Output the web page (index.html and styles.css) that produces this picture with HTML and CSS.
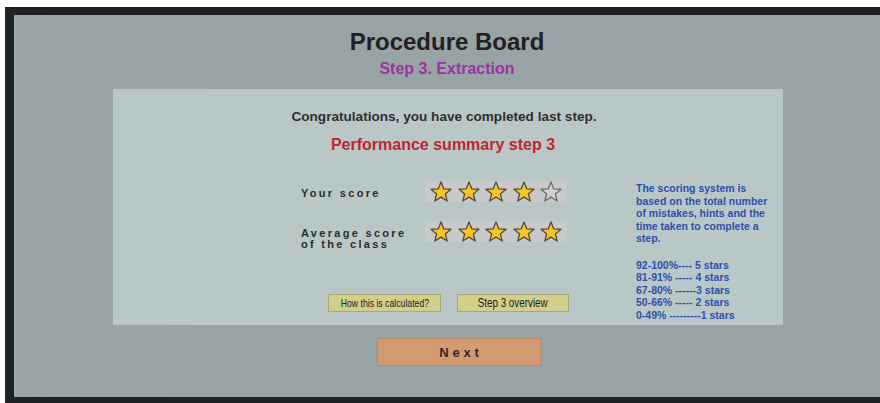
FILE: index.html
```html
<!DOCTYPE html>
<html lang="en">
<head>
<meta charset="utf-8">
<title>Procedure Board</title>
<link rel="stylesheet" href="styles.css">
</head>
<body>
<svg class="defs" width="0" height="0" aria-hidden="true">
  <defs>
    <symbol id="star" viewBox="0 0 24 22">
      <polygon points="12,1 14.7,7.78 21.99,8.26 16.38,12.92 18.17,20 12,16.1 5.83,20 7.62,12.92 2.01,8.26 9.3,7.78"/>
    </symbol>
  </defs>
</svg>
<div class="monitor">
  <main class="screen">
    <h1 class="title">Procedure Board</h1>
    <h2 class="subtitle">Step 3. Extraction</h2>

    <section class="panel">
      <header class="panel-head">
        <p class="congrats">Congratulations, you have completed last step.</p>
        <h3 class="summary">Performance summary step 3</h3>
      </header>

      <div class="results">
        <div class="results-main">
          <div class="score-row">
            <span class="score-label">Your score</span>
            <div class="stars">
              <svg class="star full"><use href="#star"/></svg>
              <svg class="star full"><use href="#star"/></svg>
              <svg class="star full"><use href="#star"/></svg>
              <svg class="star full"><use href="#star"/></svg>
              <svg class="star empty"><use href="#star"/></svg>
            </div>
          </div>
          <div class="score-row">
            <span class="score-label">Average score<br>of the class</span>
            <div class="stars">
              <svg class="star full"><use href="#star"/></svg>
              <svg class="star full"><use href="#star"/></svg>
              <svg class="star full"><use href="#star"/></svg>
              <svg class="star full"><use href="#star"/></svg>
              <svg class="star full"><use href="#star"/></svg>
            </div>
          </div>

          <div class="actions">
            <button class="btn btn-small"><span class="btn-text">How this is calculated?</span></button>
            <button class="btn btn-large"><span class="btn-text">Step 3 overview</span></button>
          </div>
        </div>

        <aside class="scoring-info">
          <p>The scoring system is<br>based on the total number<br>of mistakes, hints and the<br>time taken to complete a<br>step.</p>
          <p class="scale">92-100%---- 5 stars<br>81-91% ----- 4 stars<br>67-80% ------3 stars<br>50-66% ----- 2 stars<br>0-49% ---------1 stars</p>
        </aside>
      </div>
    </section>

    <button class="next">Next</button>
  </main>
</div>
</body>
</html>
```

FILE: styles.css
```css
* {
  box-sizing: border-box;
}

html,
body {
  margin: 0;
  height: 403px;
  overflow: hidden;
  background: #ffffff;
  font-family: "Liberation Sans", Arial, sans-serif;
}

body {
  padding: 7px 0 0 5px;
}

.defs {
  position: absolute;
  width: 0;
  height: 0;
}

/* dark bezel around the display */
.monitor {
  height: 396px;
  background: #1e2227;
  border-top: 8px solid #1e2227;
  border-left: 9px solid #1e2227;
  border-bottom: 6px solid #1e2227;
}

.screen {
  height: 100%;
  background: linear-gradient(100deg, #9ba6a7 0%, #98a3a3 30%, #98a3a3 100%);
  padding-top: 13px;
  display: flex;
  flex-direction: column;
}

.title {
  margin: 0;
  text-align: center;
  font-size: 24px;
  line-height: 28px;
  font-weight: bold;
  color: #231f26;
}

.subtitle {
  margin: 3px 0 0;
  text-align: center;
  font-size: 16px;
  line-height: 20px;
  font-weight: bold;
  color: #9c33a4;
}

.panel {
  margin: 10px 0 0 99px;
  width: 670px;
  height: 236px;
  background: #b9c7c7;
  padding-top: 19px;
}

.panel-head {
  padding-right: 8px;
  text-align: center;
}

.congrats {
  margin: 0;
  font-size: 13.6px;
  line-height: 18px;
  font-weight: bold;
  color: #2e2f31;
}

.summary {
  margin: 9px 0 0;
  padding-right: 2px;
  font-size: 16px;
  line-height: 20px;
  font-weight: bold;
  color: #c2262c;
}

.results {
  display: flex;
}

.results-main {
  width: 456px;
  padding-top: 26px;
}

.score-row {
  display: flex;
  align-items: flex-start;
  padding-left: 188px;
}

.score-row + .score-row {
  margin-top: 19px;
}

.score-label {
  width: 124px;
  padding-top: 7px;
  font-size: 11px;
  line-height: 10.5px;
  letter-spacing: 2.3px;
  font-weight: bold;
  color: #2d2d2d;
}

.stars {
  width: 141px;
  height: 21px;
  background: #c9c9c9;
  display: flex;
  align-items: center;
  gap: 3.5px;
  padding-left: 4px;
}

.star {
  width: 24px;
  height: 22px;
  flex: none;
  stroke-width: 1.3;
  stroke-linejoin: round;
}

.star.full {
  fill: #f7c326;
  stroke: #4d4b45;
}

.star.empty {
  fill: #d0d0d0;
  stroke: #6b6b6b;
}

.actions {
  margin-top: 45px;
  padding-left: 215px;
  display: flex;
  gap: 16px;
}

.btn {
  height: 18px;
  padding: 0;
  background: #d3cf8b;
  border: 1px solid #aba875;
  color: #222222;
  font-family: "Liberation Sans", Arial, sans-serif;
  white-space: nowrap;
  overflow: hidden;
}

/* condensed caption face */
.btn-text {
  display: inline-block;
  transform: scaleX(0.82);
}

.btn-small {
  width: 113px;
  font-size: 10.6px;
}

.btn-large {
  width: 112px;
  font-size: 12px;
}

.scoring-info {
  padding: 27px 0 0 67px;
  font-size: 10.5px;
  line-height: 12.5px;
  font-weight: bold;
  color: #2e4fae;
}

.scoring-info p {
  margin: 0;
}

.scoring-info .scale {
  margin-top: 14px;
}

.next {
  margin: 13px 0 0 363px;
  width: 164px;
  height: 28px;
  padding: 0;
  background: #d49a72;
  border: 1px solid #b98a68;
  color: #2f2a28;
  font-family: "Liberation Sans", Arial, sans-serif;
  font-size: 13px;
  font-weight: bold;
  letter-spacing: 3.8px;
  text-indent: 3.8px;
}
```
